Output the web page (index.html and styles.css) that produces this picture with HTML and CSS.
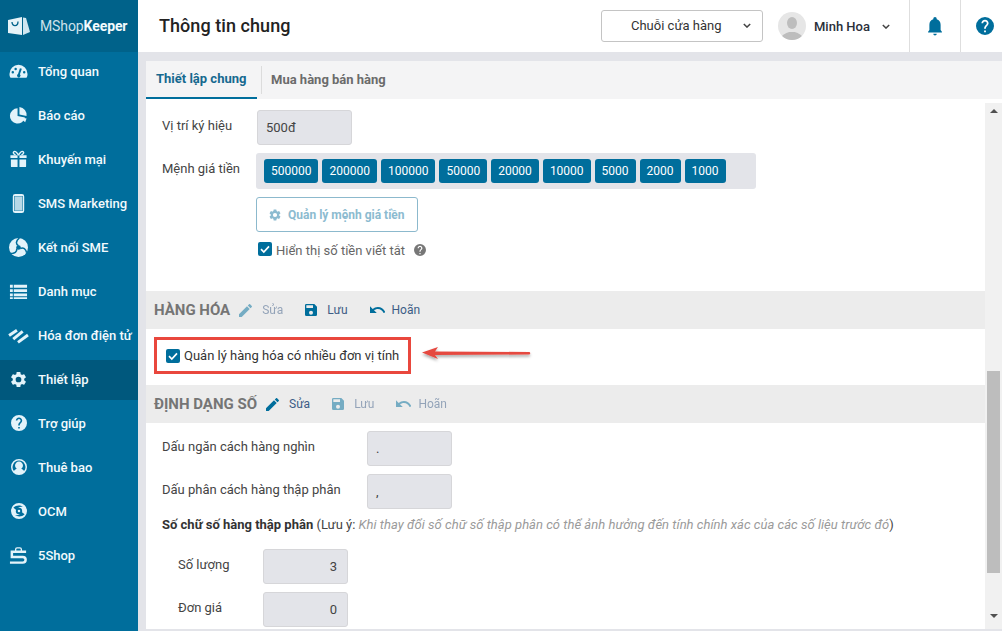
FILE: index.html
```html
<!DOCTYPE html>
<html lang="vi">
<head>
<meta charset="utf-8">
<title>MShopKeeper - Thông tin chung</title>
<link rel="stylesheet" href="styles.css">
</head>
<body>
<svg class="defs" width="0" height="0" aria-hidden="true">
  <symbol id="i-gear" viewBox="0 0 24 24"><path d="M19.14 12.94c.04-.3.06-.61.06-.94 0-.32-.02-.64-.07-.94l2.03-1.58a.49.49 0 0 0 .12-.61l-1.92-3.32a.49.49 0 0 0-.59-.22l-2.39.96c-.5-.38-1.03-.7-1.62-.94l-.36-2.54a.48.48 0 0 0-.48-.41h-3.84c-.24 0-.43.17-.47.41l-.36 2.54c-.59.24-1.13.57-1.62.94l-2.39-.96a.48.48 0 0 0-.59.22L2.74 8.87c-.12.21-.08.47.12.61l2.03 1.58c-.05.3-.09.63-.09.94s.02.64.07.94l-2.03 1.58a.49.49 0 0 0-.12.61l1.92 3.32c.12.22.37.29.59.22l2.39-.96c.5.38 1.03.7 1.62.94l.36 2.54c.05.24.24.41.48.41h3.84c.24 0 .44-.17.47-.41l.36-2.54c.59-.24 1.13-.56 1.62-.94l2.39.96c.22.08.47 0 .59-.22l1.92-3.32c.12-.22.07-.47-.12-.61l-2.01-1.58zM12 15.6A3.6 3.6 0 1 1 12 8.4a3.6 3.6 0 0 1 0 7.2z"/></symbol>
  <symbol id="i-help" viewBox="2 2 20 20"><path d="M12 2a10 10 0 1 0 0 20 10 10 0 0 0 0-20zm1 17h-2v-2h2v2zm2.07-7.75l-.9.92C13.45 12.9 13 13.5 13 15h-2v-.5c0-1.1.45-2.1 1.17-2.83l1.24-1.26c.37-.36.59-.86.59-1.41 0-1.1-.9-2-2-2s-2 .9-2 2H8c0-2.21 1.79-4 4-4s4 1.79 4 4c0 .88-.36 1.68-.93 2.25z"/></symbol>
  <symbol id="i-edit" viewBox="3 3 18 18"><path d="M3 17.25V21h3.75L17.81 9.94l-3.75-3.75L3 17.25zM20.71 7.04a1 1 0 0 0 0-1.41l-2.34-2.34a1 1 0 0 0-1.41 0l-1.83 1.83 3.75 3.75 1.83-1.83z"/></symbol>
  <symbol id="i-save" viewBox="3 3 18 18"><path d="M17 3H5a2 2 0 0 0-2 2v14a2 2 0 0 0 2 2h14a2 2 0 0 0 2-2V7l-4-4zm-5 16a3 3 0 1 1 0-6 3 3 0 0 1 0 6zm3-10H5V5h10v4z"/></symbol>
  <symbol id="i-undo" viewBox="2 7 20 10"><path d="M12.5 8c-2.65 0-5.05.99-6.9 2.6L2 7v9h9l-3.62-3.62c1.39-1.16 3.16-1.88 5.12-1.88 3.54 0 6.55 2.31 7.6 5.5l2.37-.78C21.08 11.03 17.15 8 12.5 8z"/></symbol>
  <symbol id="i-check" viewBox="0 0 14 14"><path d="M3 7.2l2.8 2.8L11 4.4" fill="none" stroke="#fff" stroke-width="1.7"/></symbol>
  <symbol id="i-chev" viewBox="0 0 10 6"><path d="M1 1l4 4 4-4" fill="none" stroke="currentColor" stroke-width="1.8"/></symbol>
</svg>

<div class="app">
  <aside class="sidebar">
    <div class="brand">
      <svg class="brand-logo" viewBox="0 0 22 20"><path d="M0 4l14-3v18L0 17z" fill="#e6f3f8"/><path d="M15 1.5l3 .5 4 14-7 3z" fill="#cfe6f0"/><path d="M4 6c0 5 6 5 6-.5" fill="none" stroke="#00628a" stroke-width="1.3"/></svg>
      <span class="brand-name">MShop<b>Keeper</b></span>
    </div>
    <nav class="menu">
      <a class="menu-item"><svg class="menu-icon" viewBox="0 0 20 20"><path fill-rule="evenodd" d="M10 3a9.5 9.5 0 0 0-9.5 9.5c0 1.7.4 3.1 1.1 4h16.8c.7-.9 1.100-2.300 1.100-4A9.500 9.500 0 0 0 10 3zM4 9.500a1.300 1.300 0 1 1 0 2.600 1.300 1.300 0 0 1 0-2.600zM7 6a1.300 1.300 0 1 1 0 2.600A1.300 1.300 0 0 1 7 6zm6.500 1L11.500 13a1.800 1.800 0 1 1-2-.3L11.500 6.500zM16 9.500a1.300 1.300 0 1 1 0 2.600 1.300 1.300 0 0 1 0-2.600z"/></svg><span>Tổng quan</span></a>
      <a class="menu-item"><svg class="menu-icon" viewBox="0 0 20 20"><path d="M9 2.500a8 8 0 1 0 7.800 9.600L9 10.500z"/><path d="M11 1v8l7.500 1.500A8.500 8.500 0 0 0 11 1z"/><path d="M10.500 11.500l8 1.600-1.500 4z"/></svg><span>Báo cáo</span></a>
      <a class="menu-item"><svg class="menu-icon" viewBox="0 0 20 20"><path d="M2 10h7v8H3a1 1 0 0 1-1-1zm9 0h7v7a1 1 0 0 1-1 1h-6zM1.500 5.500H9v3H1.500zm9.500 0h7.500v3H11z"/><path d="M10 5.500C8 2 6.500 1 5.300 1.600 4 2.300 4.600 4.500 7 5.200M10 5.500c2-3.500 3.500-4.500 4.700-3.900 1.300.7.700 2.900-1.700 3.600" fill="none" stroke="#e3f3fa" stroke-width="1.5"/></svg><span>Khuyến mại</span></a>
      <a class="menu-item"><svg class="menu-icon" viewBox="0 0 20 20"><path fill-rule="evenodd" d="M6.500 0h7A2.500 2.500 0 0 1 16 2.500v15a2.500 2.500 0 0 1-2.500 2.500h-7A2.500 2.500 0 0 1 4 17.500v-15A2.500 2.500 0 0 1 6.500 0zM5.500 2v16h9V2z"/><path opacity=".8" d="M6 2.500h8v15H6z"/></svg><span>SMS Marketing</span></a>
      <a class="menu-item"><svg class="menu-icon" viewBox="0 0 20 20"><circle cx="10" cy="10" r="10"/><circle cx="10" cy="10" r="2.400" fill="#006e9c"/><g fill="none" stroke="#006e9c" stroke-width="1.600"><path d="M10 8C7 6.500 7 3 11 0"/><path d="M11.800 11C15 9.500 18 11.500 18.500 15.500"/><path d="M8.200 11C8.500 14.500 6 17 1.500 16"/></g></svg><span>Kết nối SME</span></a>
      <a class="menu-item"><svg class="menu-icon" viewBox="0 0 20 20"><path d="M1 3h3v3H1zm4 0h14v3H5zM1 7.500h3v3H1zm4 0h14v3H5zM1 12h3v3H1zm4 0h14v3H5zM1 16h3v2H1zm4 0h14v2H5z"/></svg><span>Danh mục</span></a>
      <a class="menu-item"><svg class="menu-icon menu-icon-wave" viewBox="0 0 20 20"><g fill="none" stroke="#e3f3fa" stroke-width="2.800"><path d="M1 10L8.500 5"/><path d="M5 13.500L14 6"/><path d="M9.500 16.500L19 9.500"/></g></svg><span>Hóa đơn điện tử</span></a>
      <a class="menu-item is-active"><svg class="menu-icon" viewBox="0 0 24 24"><use href="#i-gear"/></svg><span>Thiết lập</span></a>
      <a class="menu-item"><svg class="menu-icon menu-icon-sm" viewBox="0 0 20 20"><use href="#i-help"/></svg><span>Trợ giúp</span></a>
      <a class="menu-item"><svg class="menu-icon menu-icon-sm" viewBox="0 0 20 20"><path fill-rule="evenodd" d="M10 0a10 10 0 1 0 0 20 10 10 0 0 0 0-20zm0 2a8 8 0 0 1 6.300 12.900C15 13.400 13.800 12.800 12.800 12.300a5 5 0 1 0-5.600 0c-1 .5-2.200 1.100-3.500 2.600A8 8 0 0 1 10 2z"/></svg><span>Thuê bao</span></a>
      <a class="menu-item"><svg class="menu-icon menu-icon-sm" viewBox="0 0 20 20"><path fill-rule="evenodd" d="M10 0a10 10 0 1 0 0 20 10 10 0 0 0 0-20zm0 6a4 4 0 1 1 0 8 4 4 0 0 1 0-8z"/><path d="M3 6c3-3 8-4 12-1-4-1-7 1-8 4zM17 14c-3 3-8 4-12 1 4 1 7-1 8-4z" fill="#006e9c"/><circle cx="10" cy="10" r="1.600"/></svg><span>OCM</span></a>
      <a class="menu-item"><svg class="menu-icon" viewBox="0 0 20 20"><g fill="none" stroke="#e3f3fa"><path stroke-width="2.600" d="M18 6H3v5.500h11.500a2.500 2.500 0 0 1 0 6H1"/><path stroke-width="1.400" d="M7 5.500V3.500a1.500 1.500 0 0 1 1.500-1.500h3a1.500 1.500 0 0 1 1.500 1.500v2"/></g></svg><span>5Shop</span></a>
    </nav>
  </aside>

  <div class="main">
    <header class="topbar">
      <h1 class="page-title">Thông tin chung</h1>
      <div class="store-select"><span>Chuỗi cửa hàng</span><svg class="chev"><use href="#i-chev"/></svg></div>
      <div class="user">
        <svg class="avatar" viewBox="0 0 28 28"><circle cx="14" cy="14" r="14" fill="#e6e6e6"/><clipPath id="av"><circle cx="14" cy="14" r="14"/></clipPath><g clip-path="url(#av)" fill="#bdbdbd"><ellipse cx="14" cy="11" rx="5" ry="6"/><path d="M3 28c0-6 6-7 8-8h6c2 1 8 2 8 8z"/></g></svg>
        <span class="user-name">Minh Hoa</span>
        <svg class="chev"><use href="#i-chev"/></svg>
      </div>
      <div class="top-cell top-bell"><svg class="bell" viewBox="4 2 16 22"><path d="M12 23.500c1.100 0 2-.9 2-2h-4a2 2 0 0 0 2 2zm6.500-6.500v-6c0-3.070-1.630-5.640-4.500-6.320V4a2 2 0 0 0-4 0v.68C7.140 5.360 5.500 7.920 5.500 11v6l-1.500 2v1h16v-1z"/></svg></div>
      <div class="top-cell top-help"><svg class="help"><use href="#i-help"/></svg></div>
    </header>

    <section class="panel">
      <div class="tabs">
        <a class="tab is-active">Thiết lập chung</a>
        <i class="tab-sep"></i>
        <a class="tab tab-next">Mua hàng bán hàng</a>
      </div>
      <div class="panel-body">
        <div class="content">
          <div class="form-block block-top">
            <div class="row">
              <label class="label label-sm">Vị trí ký hiệu</label>
              <div class="field">500đ</div>
            </div>
            <div class="row">
              <label class="label label-sm">Mệnh giá tiền</label>
              <div class="denoms">
                <span class="denom">500000</span><span class="denom">200000</span><span class="denom">100000</span><span class="denom">50000</span><span class="denom">20000</span><span class="denom">10000</span><span class="denom">5000</span><span class="denom">2000</span><span class="denom">1000</span>
              </div>
            </div>
            <button class="manage" type="button"><svg class="manage-icon"><use href="#i-gear"/></svg>Quản lý mệnh giá tiền</button>
            <div class="check-row">
              <span class="check"><svg><use href="#i-check"/></svg></span>
              <span>Hiển thị số tiền viết tắt</span>
              <svg class="hint"><use href="#i-help"/></svg>
            </div>
          </div>

          <div class="section-bar">
            <h2 class="section-title">HÀNG HÓA</h2>
            <a class="act act-edit is-off"><svg><use href="#i-edit"/></svg>Sửa</a>
            <a class="act act-save"><svg><use href="#i-save"/></svg>Lưu</a>
            <a class="act act-undo"><svg><use href="#i-undo"/></svg>Hoãn</a>
          </div>
          <div class="highlight">
            <span class="check"><svg><use href="#i-check"/></svg></span>
            <span>Quản lý hàng hóa có nhiều đơn vị tính</span>
            <svg class="arrow" viewBox="0 0 112 16"><defs><filter id="sh" x="-10%" y="-60%" width="120%" height="260%"><feDropShadow dx="0" dy="2" stdDeviation="1.5" flood-color="#000" flood-opacity=".35"/></filter></defs><g filter="url(#sh)" fill="#e5483f"><path d="M0 6.500l16-5.500-3 4.500 94 .5a1.200 1.200 0 0 1 0 2.500l-94 .5 3 4z"/></g></svg>
          </div>

          <div class="section-bar">
            <h2 class="section-title">ĐỊNH DẠNG SỐ</h2>
            <a class="act act-edit"><svg><use href="#i-edit"/></svg>Sửa</a>
            <a class="act act-save is-off"><svg><use href="#i-save"/></svg>Lưu</a>
            <a class="act act-undo is-off"><svg><use href="#i-undo"/></svg>Hoãn</a>
          </div>
          <div class="form-block block-num">
            <div class="row">
              <label class="label label-lg">Dấu ngăn cách hàng nghìn</label>
              <div class="field">.</div>
            </div>
            <div class="row">
              <label class="label label-lg">Dấu phân cách hàng thập phân</label>
              <div class="field">,</div>
            </div>
            <p class="note"><b>Số chữ số hàng thập phân</b> (Lưu ý: <em>Khi thay đổi số chữ số thập phân có thể ảnh hưởng đến tính chính xác của các số liệu trước đó</em>)</p>
            <div class="row row-sub">
              <label class="label label-sub">Số lượng</label>
              <div class="field field-num">3</div>
            </div>
            <div class="row row-sub">
              <label class="label label-sub">Đơn giá</label>
              <div class="field field-num">0</div>
            </div>
          </div>
        </div>
        <div class="scrollbar">
          <span class="sb-up"></span>
          <span class="sb-thumb"></span>
          <span class="sb-down"></span>
        </div>
      </div>
    </section>
  </div>
</div>
</body>
</html>
```

FILE: styles.css
```css
* { box-sizing: border-box; }
html, body { margin: 0; height: 100%; overflow: hidden; }
body { font-family: Roboto, "Noto Sans", sans-serif; font-size: 13px; color: #444; background: #e3e4e9; }
.defs { position: absolute; }
.app { display: flex; width: 1002px; height: 631px; }

.sidebar { width: 138px; flex: none; background: #006e9c; color: #f2fafd; }
.brand { height: 52px; background: #00628a; display: flex; align-items: center; padding: 0 0 1px 8px; }
.brand-logo { width: 22px; height: 20px; margin-right: 10px; }
.brand-name { font-size: 14px; color: #cfe3ec; letter-spacing: -.1px; }
.brand-name b { color: #f2fafd; font-weight: 700; }
.menu { display: flex; flex-direction: column; gap: 4px; }
.menu-item { height: 40px; display: flex; align-items: center; padding: 0 0 2px 9px; font-size: 13px; font-weight: 500; }
.menu-item span { margin-left: 10px; }
.menu-item.is-active { background: #00587d; }
.menu-icon { width: 19px; height: 19px; fill: #e3f3fa; flex: none; }
.menu-icon-sm { width: 16px; height: 16px; margin: 0 1.5px; }
.menu-icon-wave { width: 21px; height: 21px; margin: 0 -1px 0 -1px; }

.main { flex: 1; min-width: 0; display: flex; flex-direction: column; }
.topbar { height: 52px; flex: none; background: #fff; display: flex; align-items: center; padding-left: 21px; }
.page-title { flex: 1; margin: 0 0 2px; font-size: 18px; letter-spacing: .06px; font-weight: 500; color: #222; }
.store-select { width: 162px; height: 32px; margin-top: -1px; border: 1px solid #c4c4c4; border-radius: 3px; display: flex; align-items: center; justify-content: space-between; padding: 0 11px 0 29px; color: #333; font-size: 13px; }
.chev { width: 8px; height: 5px; color: #444; flex: none; }
.user { display: flex; align-items: center; margin-left: 15px; width: 131px; }
.avatar { width: 28px; height: 28px; flex: none; }
.user-name { margin: 0 12px 0 8px; font-weight: 500; color: #2a2f3a; font-size: 13px; }
.top-cell { height: 52px; border-left: 1px solid #dedede; display: flex; align-items: center; justify-content: center; }
.top-bell { width: 51px; }
.top-help { width: 42px; padding-left: 7px; }
.bell { width: 16px; height: 19px; fill: #006e9c; }
.help { width: 18px; height: 18px; fill: #006e9c; }

.panel { flex: 1; min-height: 0; margin: 9px 0 2px 8px; background: #fff; display: flex; flex-direction: column; }
.tabs { height: 38px; flex: none; background: #f4f4f5; display: flex; align-items: center; }
.tab { height: 38px; line-height: 36px; font-weight: 700; color: #6b6b6b; padding: 0 10px; font-size: 13px; }
.tab.is-active { color: #16698f; background: #f4f4f5; border-bottom: 2px solid #006e9c; width: 111px; }
.tab-next { padding-left: 9px; line-height: 38px; }
.tab-sep { width: 1px; height: 28px; background: #dcdcdc; margin-left: 4px; }
.panel-body { flex: 1; min-height: 0; display: flex; }
.content { flex: 1; min-width: 0; overflow: hidden; }

.scrollbar { width: 17px; flex: none; margin-top: 4px; background: #f1f1f1; display: flex; flex-direction: column; align-items: center; }
.sb-up, .sb-down { width: 0; height: 0; border-left: 4px solid transparent; border-right: 4px solid transparent; flex: none; }
.sb-up { border-bottom: 4px solid #505050; margin-top: 6px; }
.sb-thumb { width: 13px; height: 202px; background: #bdbdbd; margin-top: 258px; flex: none; }
.sb-down { border-top: 4px solid #505050; margin-top: 41px; }

.form-block { padding-left: 16px; }
.block-top { padding-top: 11px; height: 192px; }
.block-num { padding-top: 8px; }
.row { display: flex; align-items: flex-start; margin-bottom: 8px; }
.label { line-height: 32px; color: #444; flex: none; }
.label-sm { width: 94px; }
.label-lg { width: 205px; }
.label-sub { width: 85px; }
.row-sub { padding-left: 16px; }
.field { width: 95px; height: 35px; margin-left: 1px; border: 1px solid #d6d6d9; border-radius: 3px; background: #e3e4e9; padding: 6px 8px 0; line-height: 22px; color: #444; }
.label-lg + .field { width: 85px; margin-left: 0; }
.field-num { width: 85px; margin-left: 0; text-align: right; padding-right: 10px; }

.denoms { width: 500px; height: 36px; background: #e3e4e9; border-radius: 3px; display: flex; align-items: center; gap: 4px; padding-left: 8px; }
.denom { height: 24px; line-height: 24px; padding: 0 7px; background: #006e9c; color: #fff; border-radius: 3px; font-size: 12px; }

.manage { display: flex; align-items: center; width: 162px; height: 35px; margin: 0 0 10px 94px; border: 1px solid #8cb9cd; border-radius: 3px; background: #fff; color: #8cbbd0; font: 700 12px Roboto, sans-serif; padding: 0 0 0 11px; }
.manage-icon { width: 14px; height: 14px; fill: #8cbbd0; margin-right: 6px; }
.check-row { display: flex; align-items: center; margin-left: 96px; height: 16px; color: #666; }
.check-row .check { align-self: flex-start; }
.check { width: 14px; height: 14px; background: #006e9c; border-radius: 2px; display: block; flex: none; margin-right: 4px; }
.check svg { width: 14px; height: 14px; display: block; }
.hint { width: 12px; height: 12px; fill: #777; margin-left: 9px; }

.section-bar { height: 38px; background: #ececec; display: flex; align-items: center; padding-left: 8px; }
.section-title { margin: 0 9px 0 0; font-size: 15px; font-weight: 700; color: #757575; }
.act { display: flex; align-items: center; color: #3c5c86; font-size: 12px; }
.act svg { fill: #006e9c; flex: none; }
.act.is-off { opacity: .5; }
.act-edit svg { width: 13px; height: 13px; margin-right: 10px; }
.act-save { margin-left: 22px; }
.act-save svg { width: 12px; height: 12px; margin-right: 10px; }
.act-undo { margin-left: 22px; }
.act-undo svg { width: 15px; height: 8px; margin-right: 7px; }

.highlight { position: relative; display: flex; align-items: center; width: 257px; height: 37px; margin: 8px 0 11px 8px; border: 3px solid #e9473d; padding-left: 9px; color: #333; }
.arrow { position: absolute; left: 265px; top: 6px; width: 112px; height: 16px; overflow: visible; }

.note { margin: -8px 0 8px; line-height: 32px; height: 32px; color: #444; white-space: nowrap; }
.note em { color: #9a9a9a; letter-spacing: .03px; }
.note b { color: #333; }
```
